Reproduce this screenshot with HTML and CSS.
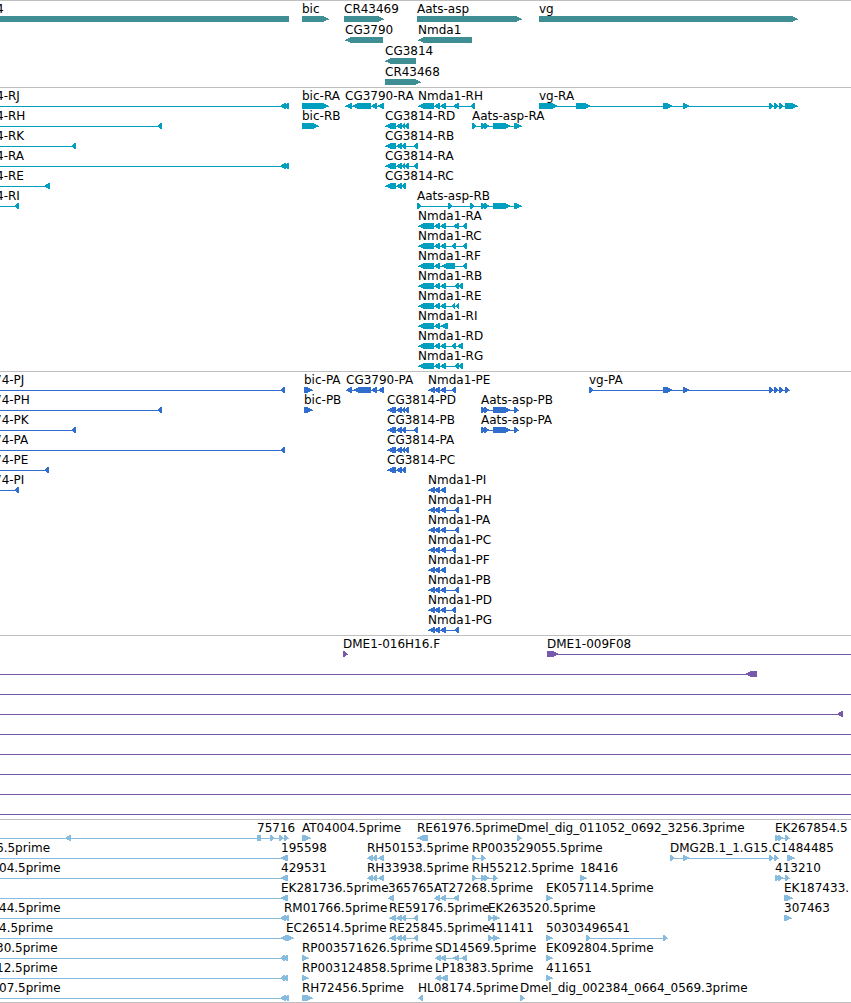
FILE: index.html
```
<!DOCTYPE html>
<html lang="en">
<head>
    <meta charset="UTF-8">
    <meta name="viewport" content="width=device-width, initial-scale=1.0">
    <title>Genome Browser</title>
    <link rel="stylesheet" href="styles.css">
</head>
<body>

    <main class="browser">
        <section class="track genes" id="genes"></section>
        <section class="track transcripts" id="transcripts"></section>
        <section class="track proteins" id="proteins"></section>
        <section class="track clones" id="clones"></section>
        <section class="track ests" id="ests"></section>
    </main>

    <script src="tracks.js"></script>
</body>
</html>
```
FILE: styles.css
```
*{
    box-sizing: border-box;
}

body{
    margin: 0;
    background-color: #fff;
    color: #000;
    font-family: "DejaVu Sans", sans-serif;
    font-size: 12px;
}

.browser{
    overflow: hidden;
}

.track{
    padding: 2px 0 1px;
    border-top: 1px solid #bfbfbf;
}

.track:last-child{
    padding-bottom: 0;
    border-bottom: 1px solid #bfbfbf;
}

.row{
    position: relative;
    height: 20px;
    padding-top: 13px;
}

.genes{
    padding-bottom: 0;
    color: #3e8e94;
}

.genes .row{
    height: 21px;
}

.transcripts{
    color: #009fbf;
}

.proteins{
    color: #316dcd;
}

.clones{
    color: #7759ab;
}

.ests{
    color: #88bcde;
}

.label{
    position: absolute;
    top: 0;
    line-height: 12px;
    white-space: nowrap;
    color: #000;
}

.glyphs{
    display: block;
    width: 100%;
    height: 6px;
    fill: currentColor;
    shape-rendering: crispEdges;
}
```
FILE: tracks.js
```
const SVG_NS = 'http://www.w3.org/2000/svg';
const HEAD = 7;
const LEFT = [-20, -12];    // block before the visible region
const RIGHT = [4000, 4010]; // block after the visible region

// exons shared by several transcripts
const nmda = [[418, 434], [434, 440], [440, 446]];
const nmdaCds = [[428, 435], [434, 440], [440, 446]];
const aats = [[481, 485], [484, 490], [493, 511]];
const cg3814 = [[385, 396], [396, 402]];
const cg3814Cds = [[387, 396], [396, 402]];
const vgMiddle = [[663, 673], [683, 690], [769, 774], [774, 779], [779, 784]];
const re = [[389, 396], [396, 402], [401, 406], [413, 418]];
const rh = [[367, 373], [372, 377], [378, 384]];

// a row is a list of features: [label, label x, strand, exons]
const tracks = {
    genes: [
        [
            ['4', -4, '', [[-20, 289]]],
            ['bic', 302, '>', [[302, 329]]],
            ['CR43469', 344, '>', [[344, 384]]],
            ['Aats-asp', 417, '>', [[417, 522]]],
            ['vg', 539, '>', [[539, 798]]]
        ],
        [
            ['CG3790', 345, '<', [[345, 383]]],
            ['Nmda1', 418, '<', [[418, 472]]]
        ],
        [['CG3814', 385, '<', [[385, 416]]]],
        [['CR43468', 385, '>', [[385, 421]]]]
    ],
    transcripts: [
        [
            ['4-RJ', -4, '<', [LEFT, [280, 286], [284, 289]]],
            ['bic-RA', 302, '>', [[302, 329]]],
            ['CG3790-RA', 345, '<', [[345, 352], [352, 371], [371, 377], [377, 384]]],
            ['Nmda1-RH', 418, '<', [...nmda, [453, 459], [470, 475]]],
            ['vg-RA', 539, '>', [[539, 558], [576, 591], ...vgMiddle, [785, 798]]]
        ],
        [
            ['4-RH', -4, '<', [LEFT, [157, 162]]],
            ['bic-RB', 302, '>', [[302, 319]]],
            ['CG3814-RD', 385, '<', [...cg3814, [401, 405], [404, 409]]],
            ['Aats-asp-RA', 472, '>', [[472, 477], ...aats, [514, 522]]]
        ],
        [
            ['4-RK', -4, '<', [LEFT, [71, 76]]],
            ['CG3814-RB', 385, '<', [...cg3814, [401, 406], [413, 418]]]
        ],
        [
            ['4-RA', -4, '<', [LEFT, [280, 286], [284, 289]]],
            ['CG3814-RA', 385, '<', [...cg3814, [401, 405], [404, 409], [413, 418]]]
        ],
        [
            ['4-RE', -4, '<', [LEFT, [44, 50]]],
            ['CG3814-RC', 385, '<', [...cg3814, [401, 406]]]
        ],
        [
            ['4-RI', -4, '<', [LEFT, [14, 19]]],
            ['Aats-asp-RB', 417, '>', [[417, 422], [448, 453], [470, 475], ...aats, [514, 522]]]
        ],
        [['Nmda1-RA', 418, '<', [...nmda, [453, 459], [462, 467]]]],
        [['Nmda1-RC', 418, '<', [...nmda, [451, 456], [462, 467]]]],
        [['Nmda1-RF', 418, '<', [[418, 434], [434, 440], [441, 455], [462, 467]]]],
        [['Nmda1-RB', 418, '<', [...nmda, [454, 459], [458, 463]]]],
        [['Nmda1-RE', 418, '<', [...nmda, [451, 455], [455, 459]]]],
        [['Nmda1-RI', 418, '<', [[418, 434], [434, 440], [440, 448]]]],
        [['Nmda1-RD', 418, '<', [...nmda, [451, 456], [457, 463]]]],
        [['Nmda1-RG', 418, '<', [...nmda, [454, 459], [458, 463]]]]
    ],
    proteins: [
        [
            ['74-PJ', -6, '<', [LEFT, [280, 285]]],
            ['bic-PA', 304, '>', [[304, 313]]],
            ['CG3790-PA', 346, '<', [[346, 352], [353, 371], [371, 377], [378, 384]]],
            ['Nmda1-PE', 428, '<', [...nmdaCds, [451, 456]]],
            ['vg-PA', 589, '>', [[589, 594], ...vgMiddle, [785, 790]]]
        ],
        [
            ['74-PH', -6, '<', [LEFT, [157, 162]]],
            ['bic-PB', 304, '>', [[304, 313]]],
            ['CG3814-PD', 387, '<', [...cg3814Cds, [401, 405], [404, 409]]],
            ['Aats-asp-PB', 481, '>', [...aats, [514, 519]]]
        ],
        [
            ['74-PK', -6, '<', [LEFT, [71, 76]]],
            ['CG3814-PB', 387, '<', [...cg3814Cds, [401, 406], [413, 418]]],
            ['Aats-asp-PA', 481, '>', [...aats, [514, 519]]]
        ],
        [
            ['74-PA', -6, '<', [LEFT, [280, 285]]],
            ['CG3814-PA', 387, '<', [...cg3814Cds, [401, 405], [404, 409]]]
        ],
        [
            ['74-PE', -6, '<', [LEFT, [44, 49]]],
            ['CG3814-PC', 387, '<', [...cg3814Cds, [401, 406]]]
        ],
        [
            ['74-PI', -6, '<', [LEFT, [14, 19]]],
            ['Nmda1-PI', 428, '<', nmdaCds]
        ],
        [['Nmda1-PH', 428, '<', [...nmdaCds, [454, 459]]]],
        [['Nmda1-PA', 428, '<', [...nmdaCds, [454, 459]]]],
        [['Nmda1-PC', 428, '<', [...nmdaCds, [451, 456]]]],
        [['Nmda1-PF', 428, '<', nmdaCds]],
        [['Nmda1-PB', 428, '<', [...nmdaCds, [454, 459]]]],
        [['Nmda1-PD', 428, '<', [...nmdaCds, [451, 456]]]],
        [['Nmda1-PG', 428, '<', [...nmdaCds, [454, 459]]]]
    ],
    clones: [
        [
            ['DME1-016H16.F', 343, '>', [[343, 348]]],
            ['DME1-009F08', 547, '>', [[547, 559], RIGHT]]
        ],
        [['', 0, '<', [LEFT, [745, 757]]]],
        [['', 0, '<', [LEFT, RIGHT]]],
        [['', 0, '<', [LEFT, [837, 843]]]],
        [['', 0, '<', [LEFT, RIGHT]]],
        [['', 0, '<', [LEFT, RIGHT]]],
        [['', 0, '<', [LEFT, RIGHT]]],
        [['', 0, '<', [LEFT, RIGHT]]],
        [['', 0, '<', [LEFT, RIGHT]]]
    ],
    ests: [
        [
            ['', 0, '<', [LEFT, [65, 71], [256, 261]]],
            ['75716', 257, '>', [[257, 262], [270, 275], [279, 284], [284, 289]]],
            ['AT04004.5prime', 302, '>', [[302, 311]]],
            ['RE61976.5prime', 417, '<', [[417, 428]]],
            ['Dmel_dig_011052_0692_3256.3prime', 517, '>', [[517, 522]]],
            ['EK267854.5', 775, '>', [[775, 780], [778, 784], [785, 790]]]
        ],
        [
            ['6.5prime', -4, '<', [LEFT, [280, 288]]],
            ['195598', 281, '', []],
            ['RH50153.5prime', 367, '<', rh],
            ['RP003529055.5prime', 472, '>', [[472, 477], [481, 486]]],
            ['DMG2B.1_1.G15.C1484485', 670, '>', [[670, 675], [683, 690], [769, 774], [774, 779]]],
            ['', 0, '>', [[787, 795]]]
        ],
        [
            ['04.5prime', -1, '<', [LEFT, [280, 288]]],
            ['429531', 281, '', []],
            ['RH33938.5prime', 367, '<', rh],
            ['RH55212.5prime', 472, '>', [[472, 477], [481, 486], [484, 490], [493, 498]]],
            ['18416', 580, '>', [[580, 587]]],
            ['413210', 775, '>', [[775, 780], [778, 784], [785, 790]]]
        ],
        [
            ['', 0, '<', [LEFT, [280, 288]]],
            ['EK281736.5prime', 281, '', []],
            ['365765', 388, '<', [[388, 394]]],
            ['AT27268.5prime', 434, '<', [[434, 440], [440, 446], [453, 459]]],
            ['EK057114.5prime', 546, '>', [[546, 553]]],
            ['EK187433.', 784, '>', [[784, 793]]]
        ],
        [
            ['44.5prime', -1, '<', [LEFT, [280, 286], [284, 289]]],
            ['RM01766.5prime', 284, '', []],
            ['RE59176.5prime', 389, '<', re],
            ['EK263520.5prime', 488, '>', [[488, 494], [493, 500]]],
            ['307463', 784, '>', [[784, 792]]]
        ],
        [
            ['4.5prime', -1, '<', [LEFT, [280, 287]]],
            ['EC26514.5prime', 286, '>', [[285, 294]]],
            ['RE25845.5prime', 389, '<', re],
            ['411411', 488, '>', [[488, 494], [493, 500]]],
            ['50303496541', 546, '>', [[546, 553]]],
            ['', 0, '>', [[586, 591], [663, 668]]]
        ],
        [
            ['30.5prime', -4, '<', [LEFT, [280, 285], [283, 288]]],
            ['RP003571626.5prime', 302, '>', [[302, 309]]],
            ['SD14569.5prime', 435, '<', [[435, 441], [440, 446], [452, 459], [461, 467]]],
            ['EK092804.5prime', 546, '>', [[546, 553]]]
        ],
        [
            ['12.5prime', -4, '<', [LEFT, [280, 285], [283, 288]]],
            ['RP003124858.5prime', 302, '>', [[302, 309]]],
            ['LP18383.5prime', 435, '<', [[435, 441], [440, 448]]],
            ['411651', 546, '>', [[546, 553]]]
        ],
        [
            ['07.5prime', -1, '<', [LEFT, [280, 286], [284, 289]]],
            ['RH72456.5prime', 302, '>', [[302, 313]]],
            ['HL08174.5prime', 418, '<', [[418, 423]]],
            ['Dmel_dig_002384_0664_0569.3prime', 520, '>', [[520, 525]]]
        ]
    ]
};

// all outlines run clockwise, so overlapping parts fill as one shape
function exonPath(start, end, strand){
    let head = Math.min(HEAD, end - start);
    if(strand === '>'){
        return `M${start} 0H${end - head + 1}L${end} 3L${end - head + 1} 6H${start}Z`;
    }
    if(strand === '<'){
        return `M${start} 3L${start + head - 1} 0H${end}V6H${start + head - 1}Z`;
    }
    return `M${start} 0H${end}V6H${start}Z`;
}

function featurePath(strand, exons){
    if(!exons.length){
        return '';
    }
    let start = exons[0][0];
    let end = exons[exons.length - 1][1];
    // one pixel line through the introns, then the exons over it
    let path = `M${start} 3H${end}V4H${start}Z`;
    for(let [from, to] of exons){
        path += exonPath(from, to, strand);
    }
    return path;
}

function createRow(features){
    let row = document.createElement('div');
    row.classList.add('row');

    let svg = document.createElementNS(SVG_NS, 'svg');
    svg.setAttribute('class', 'glyphs');
    svg.setAttribute('aria-hidden', 'true');

    for(let [text, x, strand, exons] of features){
        let path = document.createElementNS(SVG_NS, 'path');
        path.setAttribute('d', featurePath(strand, exons));
        svg.appendChild(path);

        if(text){
            let label = document.createElement('span');
            label.classList.add('label');
            label.style.left = `${x}px`;
            label.textContent = text;
            row.appendChild(label);
        }
    }

    row.appendChild(svg);
    return row;
}

for(let [id, rows] of Object.entries(tracks)){
    let track = document.getElementById(id);
    rows.forEach(features => track.appendChild(createRow(features)));
}
```
